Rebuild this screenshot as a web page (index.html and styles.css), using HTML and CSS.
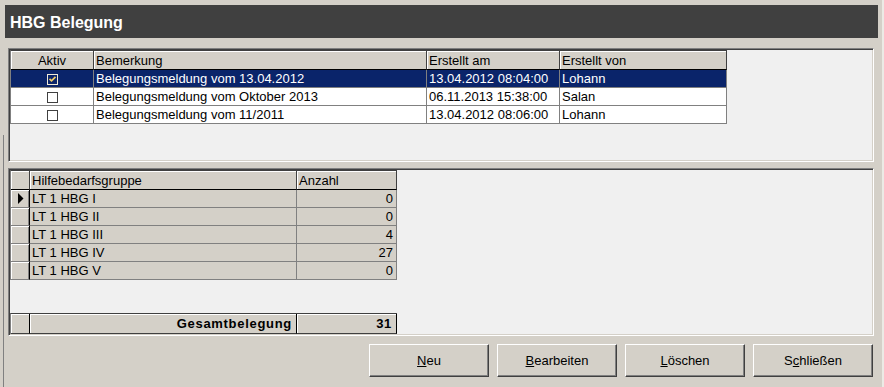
FILE: index.html
```html
<!DOCTYPE html>
<html>
<head>
<meta charset="utf-8">
<title>HBG Belegung</title>
<link rel="stylesheet" href="styles.css">
</head>
<body>
<div class="window">
  <div class="titlebar">HBG Belegung</div>
  <div class="main">
    <div class="panel panel-list">
      <div class="grid grid-list">
        <div class="hc center">Aktiv</div>
        <div class="hc">Bemerkung</div>
        <div class="hc">Erstellt am</div>
        <div class="hc">Erstellt von</div>

        <div class="dc sel cb"><svg width="11" height="11" viewBox="0 0 11 11"><rect x="0.5" y="0.5" width="10" height="10" fill="none" stroke="#efe9d6"/><polyline points="2.5,4.8 4.5,6.8 8.5,2.8" fill="none" stroke="#f0cc6a" stroke-width="1.7"/></svg></div>
        <div class="dc sel">Belegungsmeldung vom 13.04.2012</div>
        <div class="dc sel">13.04.2012 08:04:00</div>
        <div class="dc sel">Lohann</div>

        <div class="dc cb"><svg width="11" height="11" viewBox="0 0 11 11"><rect x="0.5" y="0.5" width="10" height="10" fill="#fff" stroke="#404040"/></svg></div>
        <div class="dc">Belegungsmeldung vom Oktober 2013</div>
        <div class="dc">06.11.2013 15:38:00</div>
        <div class="dc">Salan</div>

        <div class="dc cb"><svg width="11" height="11" viewBox="0 0 11 11"><rect x="0.5" y="0.5" width="10" height="10" fill="#fff" stroke="#404040"/></svg></div>
        <div class="dc">Belegungsmeldung vom 11/2011</div>
        <div class="dc">13.04.2012 08:06:00</div>
        <div class="dc">Lohann</div>
      </div>
    </div>

    <div class="panel panel-hbg">
      <div class="grid grid-hbg">
        <div class="hc ind-h"></div>
        <div class="hc">Hilfebedarfsgruppe</div>
        <div class="hc">Anzahl</div>

        <div class="ind"><svg width="6" height="11" viewBox="0 0 6 11"><polygon points="0,0 5.5,5.5 0,11" fill="#000"/></svg></div>
        <div class="dc gray">LT 1 HBG I</div>
        <div class="dc gray num">0</div>

        <div class="ind"></div>
        <div class="dc gray">LT 1 HBG II</div>
        <div class="dc gray num">0</div>

        <div class="ind"></div>
        <div class="dc gray">LT 1 HBG III</div>
        <div class="dc gray num">4</div>

        <div class="ind"></div>
        <div class="dc gray">LT 1 HBG IV</div>
        <div class="dc gray num">27</div>

        <div class="ind"></div>
        <div class="dc gray">LT 1 HBG V</div>
        <div class="dc gray num">0</div>
      </div>
      <div class="spacer"></div>
      <div class="grid grid-foot">
        <div class="fc"></div>
        <div class="fc">Gesamtbelegung</div>
        <div class="fc">31</div>
      </div>
    </div>

    <div class="buttons">
      <button class="btn" type="button"><u>N</u>eu</button>
      <button class="btn" type="button"><u>B</u>earbeiten</button>
      <button class="btn" type="button"><u>L</u>öschen</button>
      <button class="btn" type="button">S<u>c</u>hließen</button>
    </div>
  </div>
</div>
</body>
</html>
```

FILE: styles.css
```css
* { box-sizing: border-box; }

html, body {
  margin: 0;
  padding: 0;
}

body {
  background: #d4d0c8;
  font-family: "Liberation Sans", Arial, sans-serif;
  font-size: 13px;
  color: #000;
}

.window {
  width: 884px;
  height: 387px;
  position: relative;
  overflow: hidden;
  padding-top: 5px;
  box-shadow: inset -2px 0 0 #eceae5;
}

.window::before {
  content: "";
  position: absolute;
  left: 3px;
  top: 135px;
  bottom: 0;
  width: 1px;
  background: #808080;
}

.titlebar {
  margin: 0 6px 0 5px;
  height: 33px;
  padding: 2px 0 0 5px;
  background: #404040;
  color: #fff;
  font-weight: bold;
  font-size: 16px;
  line-height: 31px;
}

.main {
  padding: 10px 10px 0 8px;
  display: flex;
  flex-direction: column;
}

.panel {
  border: 1px solid;
  border-color: #808080 #fff #fff #808080;
  box-shadow: inset 1px 1px 0 #404040, inset -1px -1px 0 #d4d0c8;
  padding: 1px;
  background: #f0f0f0;
}

.panel-list {
  height: 114px;
}

.panel-hbg {
  height: 168px;
  margin-top: 6px;
  display: flex;
  flex-direction: column;
  align-items: flex-start;
}

.spacer {
  flex: 1;
}

.grid {
  display: grid;
  width: max-content;
  border-left: 1px solid #808080;
  border-top: 1px solid #404040;
}

.grid-list {
  grid-template-columns: 83px 333px 133px 167px;
}

.grid-hbg,
.grid-foot {
  grid-template-columns: 19px 267px 100px;
}

.hc {
  height: 19px;
  line-height: 20px;
  padding: 0 2px;
  background: #d4d0c8;
  border-right: 1px solid #404040;
  border-bottom: 1px solid #000;
  box-shadow: inset 1px 1px 0 #fff;
  white-space: nowrap;
  overflow: hidden;
}

.center {
  text-align: center;
}

.dc {
  height: 18px;
  line-height: 17px;
  padding: 0 2px;
  background: #fff;
  border-right: 1px solid #808080;
  border-bottom: 1px solid #808080;
  white-space: nowrap;
  overflow: hidden;
}

.dc.sel {
  background: #0a246a;
  color: #fff;
}

.dc.gray {
  background: #d4d0c8;
}

.num {
  text-align: right;
  padding-right: 3px;
}

.cb {
  display: flex;
  align-items: center;
  justify-content: center;
  padding-top: 1px;
}

.ind {
  height: 18px;
  background: #d4d0c8;
  border-right: 1px solid #000;
  border-bottom: 1px solid #808080;
  box-shadow: inset 1px 1px 0 #fff, inset -1px 0 0 #808080;
  display: flex;
  align-items: center;
  justify-content: center;
}

.ind svg {
  margin-left: 1px;
}

.grid-foot {
  border-top: 1px solid #404040;
}

.fc {
  height: 20px;
  line-height: 19px;
  padding-right: 4px;
  background: #d4d0c8;
  border-right: 1px solid #000;
  border-bottom: 1px solid #404040;
  box-shadow: inset 1px 1px 0 #fff;
  font-weight: bold;
  text-align: right;
  letter-spacing: 0.7px;
  white-space: nowrap;
}

.buttons {
  display: flex;
  justify-content: flex-end;
  gap: 8px;
  margin-top: 8px;
  padding-right: 1px;
}

.btn {
  width: 120px;
  height: 33px;
  margin: 0;
  padding: 0;
  border: 1px solid;
  border-color: #fff #404040 #404040 #fff;
  box-shadow: inset -1px -1px 0 #808080;
  background: #d4d0c8;
  font-family: "Liberation Sans", Arial, sans-serif;
  font-size: 13px;
  color: #000;
  display: flex;
  align-items: center;
  justify-content: center;
  border-radius: 0;
}
```
